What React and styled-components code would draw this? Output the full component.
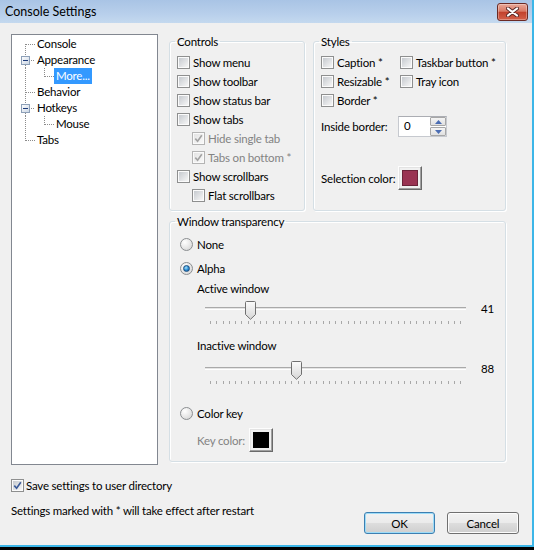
import React from 'react';
import styled, { createGlobalStyle } from 'styled-components';

const FONT = `Lato, "Liberation Sans", Arial, sans-serif`;

const GlobalStyle = createGlobalStyle`
  html, body { margin: 0; padding: 0; background: #000; }
  body { font-family: ${FONT}; font-size: 11.5px; letter-spacing: -0.2px; color: #000; }
  * { box-sizing: border-box; }
`;

const Frame = styled.div`
  width: 534px;
  height: 547px;
  background: #f0f0f0;
  border-right: 2px solid #3cb6e8;
  border-bottom: 2px solid #3cb6e8;
  display: flex;
  flex-direction: column;
`;

const TitleBar = styled.div`
  height: 23px;
  flex: none;
  display: flex;
  align-items: center;
  padding-left: 5px;
  background: linear-gradient(180deg, #a9c4e5 0%, #b8cfeb 60%, #c4d9ef 100%);
`;

const Title = styled.span`
  font-size: 12.5px;
  letter-spacing: 0;
  color: #000;
`;

const CloseButton = styled.div`
  margin-left: auto;
  margin-right: 4px;
  width: 31px;
  height: 18px;
  border: 1px solid #6b2a24;
  border-radius: 3px;
  background: linear-gradient(180deg, #e9a898 0%, #d97a66 45%, #c2422d 52%, #d4614a 100%);
  box-shadow: inset 0 0 0 1px rgba(255, 255, 255, 0.3);
  display: flex;
  align-items: center;
  justify-content: center;
`;

const Body = styled.div`
  flex: 1;
  display: flex;
  flex-direction: column;
  padding: 11px 13px 0 11px;
`;

const MainRow = styled.div`
  display: flex;
  gap: 11px;
  height: 431px;
`;

const Tree = styled.div`
  width: 147px;
  height: 431px;
  background: #fff;
  border: 1px solid #828790;
  padding-top: 1px;
`;

const TreeRow = styled.div`
  display: flex;
  align-items: center;
  height: 16px;
`;

const TreeLabel = styled.span`
  height: 16px;
  line-height: 16px;
  padding: 0 2px;
  background: ${(p) => (p.$selected ? '#3399ff' : 'transparent')};
  color: ${(p) => (p.$selected ? '#fff' : '#000')};
`;

const RightCol = styled.div`
  width: 337px;
  display: flex;
  flex-direction: column;
  gap: 3px;
`;

const TopRow = styled.div`
  display: flex;
  gap: 8px;
  height: 177px;
`;

const Group = styled.fieldset`
  margin: 0;
  padding: 0;
  width: ${(p) => p.$width}px;
  height: ${(p) => p.$height || 177}px;
  border: 1px solid #d5dfe5;
  border-radius: 3px;
  box-shadow: inset 1px 1px 0 #fff, 1px 1px 0 #fff;
  min-width: 0;
`;

const Legend = styled.legend`
  margin-left: 5px;
  padding: 0 2px;
  line-height: 15px;
`;

const GroupBody = styled.div`
  padding: ${(p) => p.$top ?? 4}px 7px 0 7px;
  display: flex;
  flex-direction: column;
`;

const CheckRow = styled.label`
  display: flex;
  align-items: center;
  height: 19px;
  gap: ${(p) => p.$gap ?? 3}px;
  margin-left: ${(p) => p.$indent || 0}px;
  color: ${(p) => (p.$disabled ? '#838383' : '#000')};
  white-space: nowrap;
`;

const Box = styled.span`
  width: 13px;
  height: 13px;
  flex: none;
  border: 1px solid ${(p) => (p.$disabled ? '#b4b4b4' : '#8e8f8f')};
  padding: 1px;
  background: ${(p) =>
    p.$disabled
      ? 'linear-gradient(135deg, #e4e4e4, #f8f8f8) content-box, #fafafa'
      : 'linear-gradient(135deg, #c6cacf, #f6f6f6) content-box, #fbfbfb'};
  display: flex;
  align-items: center;
  justify-content: center;
`;

const StylesGrid = styled.div`
  display: grid;
  grid-template-columns: 79px auto;
  grid-auto-rows: 19px;
`;

const FieldRow = styled.div`
  display: flex;
  align-items: center;
  height: ${(p) => p.$height}px;
  margin-top: ${(p) => p.$top}px;
  margin-left: ${(p) => p.$indent || 0}px;
  color: ${(p) => (p.$disabled ? '#838383' : '#000')};
  white-space: nowrap;
`;

const FieldLabel = styled.span`
  width: ${(p) => p.$width}px;
  flex: none;
`;

const Spinner = styled.div`
  width: 49px;
  height: 21px;
  display: flex;
  background: #fff;
  border: 1px solid #c6c9cf;
  border-top-color: #abadb3;
`;

const SpinInput = styled.div`
  flex: 1;
  padding-left: 5px;
  line-height: 18px;
`;

const SpinButtons = styled.div`
  width: 16px;
  display: flex;
  flex-direction: column;
  gap: 1px;
`;

const SpinButton = styled.div`
  flex: 1;
  border: 1px solid #a7a7a7;
  border-radius: 1px;
  background: linear-gradient(180deg, #f4f4f4, #e0e0e0);
  display: flex;
  align-items: center;
  justify-content: center;
`;

const ColorButton = styled.div`
  width: 24px;
  height: 24px;
  padding: 3px;
  border: 1px solid;
  border-color: #fdfdfd #6a6a6a #6a6a6a #fdfdfd;
  box-shadow: inset -1px -1px 0 #a0a0a0, inset 1px 1px 0 #e3e3e3;
  background: #f0f0f0;
  display: flex;
`;

const ColorFill = styled.span`
  flex: 1;
  background: ${(p) => p.$color};
  border: 1px solid rgba(0, 0, 0, 0.3);
`;

const RadioRow = styled.label`
  display: flex;
  align-items: center;
  height: 19px;
  gap: 4px;
  margin-top: ${(p) => p.$top}px;
  margin-left: 3px;
`;

const RadioCircle = styled.span`
  width: 13px;
  height: 13px;
  flex: none;
  border-radius: 50%;
  border: 1px solid #8b8e91;
  background: radial-gradient(circle at 35% 30%, #ffffff 0%, #e6e6e6 55%, #cfcfcf 100%);
  display: flex;
  align-items: center;
  justify-content: center;
`;

const RadioDot = styled.span`
  width: 7px;
  height: 7px;
  border-radius: 50%;
  border: 1px solid #1d4f7f;
  background: radial-gradient(circle at 40% 35%, #a9e3fb 0%, #2c8fd6 50%, #0d4d8f 100%);
`;

const SubLabel = styled.div`
  margin-left: 20px;
  margin-top: ${(p) => p.$top}px;
  line-height: 15px;
`;

const SliderRow = styled.div`
  display: flex;
  align-items: flex-start;
  height: 28px;
  margin-left: 28px;
  margin-top: ${(p) => p.$top}px;
`;

const Track = styled.div`
  position: relative;
  width: 261px;
  height: 28px;
  display: flex;
  flex-direction: column;
`;

const TrackLine = styled.div`
  margin-top: 9px;
  height: 3px;
  background: #e4e4e4;
  border-top: 1px solid #a9a9a9;
  border-bottom: 1px solid #fff;
`;

const Ticks = styled.div`
  margin-top: 11px;
  padding: 0 5px;
  height: 3px;
  display: flex;
  justify-content: space-between;
`;

const Tick = styled.span`
  width: 1px;
  height: 3px;
  background: #a8a8a8;
`;

const Thumb = styled.svg`
  position: absolute;
  top: 3px;
`;

const SliderValue = styled.span`
  width: 20px;
  margin-left: 8px;
  margin-top: 3px;
  text-align: right;
  line-height: 15px;
`;

const SaveRow = styled(CheckRow)`
  margin-top: 11px;
`;

const Footer = styled.div`
  display: flex;
  align-items: flex-start;
`;

const Note = styled.span`
  margin-top: 8px;
  line-height: 15px;
`;

const Buttons = styled.div`
  margin-left: auto;
  margin-top: 17px;
  display: flex;
  gap: 12px;
`;

const Button = styled.button`
  width: ${(p) => p.$width}px;
  height: 22px;
  font-family: ${FONT};
  font-size: 11.5px;
  letter-spacing: -0.2px;
  color: #000;
  padding: 0;
  border: 1px solid ${(p) => (p.$default ? '#3c7fb1' : '#707070')};
  border-radius: 3px;
  background: linear-gradient(180deg, #f2f2f2 0%, #ebebeb 48%, #dddddd 52%, #cfcfcf 100%);
  box-shadow: inset 0 0 0 1px ${(p) => (p.$default ? '#9ddcf8' : '#fcfcfc')};
`;

function Check({ checked, disabled }) {
  return (
    <Box $disabled={disabled}>
      {checked && (
        <svg width="9" height="9" viewBox="0 0 9 9">
          <path
            d="M1.3 4.6 L3.6 7.2 L7.8 1.2"
            fill="none"
            stroke={disabled ? '#a2a2a2' : '#3a5a98'}
            strokeWidth="1.6"
          />
        </svg>
      )}
    </Box>
  );
}

function CheckItem({ label, checked, disabled, indent, gap }) {
  return (
    <CheckRow $disabled={disabled} $indent={indent} $gap={gap}>
      <Check checked={checked} disabled={disabled} />
      <span>{label}</span>
    </CheckRow>
  );
}

function Radio({ label, checked, top }) {
  return (
    <RadioRow $top={top}>
      <RadioCircle>{checked && <RadioDot />}</RadioCircle>
      <span>{label}</span>
    </RadioRow>
  );
}

const DOT = { stroke: '#8c8c8c', strokeWidth: 1, strokeDasharray: '1 1', shapeRendering: 'crispEdges' };

// connector for a top level tree row: first, mid, last, box, pass
function Connector({ kind }) {
  const v = [];
  if (kind === 'first') v.push([8, 16]);
  if (kind === 'mid' || kind === 'pass') v.push([0, 16]);
  if (kind === 'last') v.push([0, 9]);
  if (kind === 'box') { v.push([0, 4]); v.push([13, 16]); }
  return (
    <svg width="23" height="16" style={{ flex: 'none' }}>
      {v.map(([a, b], i) => (
        <line key={i} x1="13.5" y1={a} x2="13.5" y2={b} {...DOT} />
      ))}
      {kind !== 'pass' && (
        <line x1={kind === 'box' ? 19 : 14} y1="8.5" x2="23" y2="8.5" {...DOT} />
      )}
      {kind === 'box' && (
        <g shapeRendering="crispEdges">
          <rect x="9.5" y="4.5" width="8" height="8" fill="url(#tbox)" stroke="#8da0b8" />
          <line x1="11" y1="8.5" x2="16" y2="8.5" stroke="#1d3b79" />
        </g>
      )}
      <defs>
        <linearGradient id="tbox" x1="0" y1="0" x2="1" y2="1">
          <stop offset="0" stopColor="#ffffff" />
          <stop offset="1" stopColor="#c8d4e3" />
        </linearGradient>
      </defs>
    </svg>
  );
}

function ChildConnector() {
  return (
    <svg width="19" height="16" style={{ flex: 'none' }}>
      <line x1="9.5" y1="0" x2="9.5" y2="9" {...DOT} />
      <line x1="10" y1="8.5" x2="19" y2="8.5" {...DOT} />
    </svg>
  );
}

const treeItems = [
  { label: 'Console', kind: 'first' },
  { label: 'Appearance', kind: 'box' },
  { label: 'More...', child: true, selected: true },
  { label: 'Behavior', kind: 'mid' },
  { label: 'Hotkeys', kind: 'box' },
  { label: 'Mouse', child: true },
  { label: 'Tabs', kind: 'last' },
];

function Slider({ value, top }) {
  const center = 5 + (value / 255) * 251;
  return (
    <SliderRow $top={top}>
      <Track>
        <TrackLine />
        <Ticks>
          {Array.from({ length: 41 }).map((_, i) => (
            <Tick key={i} />
          ))}
        </Ticks>
        <Thumb width="11" height="19" viewBox="0 0 11 19" style={{ left: Math.round(center - 5.5) }}>
          <defs>
            <linearGradient id={`th${value}`} x1="0" y1="0" x2="0" y2="1">
              <stop offset="0" stopColor="#fbfbfb" />
              <stop offset="1" stopColor="#d6d6d6" />
            </linearGradient>
          </defs>
          <path
            d="M0.5 1.5 Q0.5 0.5 1.5 0.5 H9.5 Q10.5 0.5 10.5 1.5 V13.5 L5.5 18.3 L0.5 13.5 Z"
            fill={`url(#th${value})`}
            stroke="#707070"
          />
        </Thumb>
      </Track>
      <SliderValue>{value}</SliderValue>
    </SliderRow>
  );
}

function Triangle({ up }) {
  return (
    <svg width="7" height="4" viewBox="0 0 7 4">
      <path d={up ? 'M0 4 L3.5 0 L7 4 Z' : 'M0 0 L3.5 4 L7 0 Z'} fill="#4b6db3" />
    </svg>
  );
}

export default function App() {
  return (
    <>
      <GlobalStyle />
      <Frame>
        <TitleBar>
          <Title>Console Settings</Title>
          <CloseButton>
            <svg width="13" height="10" viewBox="0 0 13 10">
              <path d="M2 1.5 L11 8.5 M11 1.5 L2 8.5" stroke="#5a2a28" strokeWidth="4" strokeLinecap="round" />
              <path d="M2 1.5 L11 8.5 M11 1.5 L2 8.5" stroke="#fff" strokeWidth="2.2" strokeLinecap="round" />
            </svg>
          </CloseButton>
        </TitleBar>

        <Body>
          <MainRow>
            <Tree>
              {treeItems.map((item) => (
                <TreeRow key={item.label}>
                  <Connector kind={item.child ? 'pass' : item.kind} />
                  {item.child && <ChildConnector />}
                  <TreeLabel $selected={item.selected}>{item.label}</TreeLabel>
                </TreeRow>
              ))}
            </Tree>

            <RightCol>
              <TopRow>
                <Group $width={136}>
                  <Legend>Controls</Legend>
                  <GroupBody>
                    <CheckItem label="Show menu" />
                    <CheckItem label="Show toolbar" />
                    <CheckItem label="Show status bar" />
                    <CheckItem label="Show tabs" />
                    <CheckItem label="Hide single tab" checked disabled indent={15} />
                    <CheckItem label="Tabs on bottom *" checked disabled indent={15} />
                    <CheckItem label="Show scrollbars" />
                    <CheckItem label="Flat scrollbars" indent={15} />
                  </GroupBody>
                </Group>

                <Group $width={193}>
                  <Legend>Styles</Legend>
                  <GroupBody>
                    <StylesGrid>
                      <CheckItem label="Caption *" />
                      <CheckItem label="Taskbar button *" />
                      <CheckItem label="Resizable *" />
                      <CheckItem label="Tray icon" />
                      <CheckItem label="Border *" />
                    </StylesGrid>
                    <FieldRow $height={21} $top={6}>
                      <FieldLabel $width={77}>Inside border:</FieldLabel>
                      <Spinner>
                        <SpinInput>0</SpinInput>
                        <SpinButtons>
                          <SpinButton><Triangle up /></SpinButton>
                          <SpinButton><Triangle /></SpinButton>
                        </SpinButtons>
                      </Spinner>
                    </FieldRow>
                    <FieldRow $height={24} $top={29}>
                      <FieldLabel $width={77}>Selection color:</FieldLabel>
                      <ColorButton>
                        <ColorFill $color="#9a3352" />
                      </ColorButton>
                    </FieldRow>
                  </GroupBody>
                </Group>
              </TopRow>

              <Group $width={337} $height={248}>
                <Legend>Window transparency</Legend>
                <GroupBody $top={0}>
                  <Radio label="None" top={6} />
                  <Radio label="Alpha" checked top={5} />
                  <SubLabel $top={3}>Active window</SubLabel>
                  <Slider value={41} top={2} />
                  <SubLabel $top={12}>Inactive window</SubLabel>
                  <Slider value={88} top={5} />
                  <Radio label="Color key" top={18} />
                  <FieldRow $height={24} $top={5} $indent={20} $disabled>
                    <FieldLabel $width={52}>Key color:</FieldLabel>
                    <ColorButton>
                      <ColorFill $color="#000" />
                    </ColorButton>
                  </FieldRow>
                </GroupBody>
              </Group>
            </RightCol>
          </MainRow>

          <SaveRow $gap={2}>
            <Check checked />
            <span>Save settings to user directory</span>
          </SaveRow>

          <Footer>
            <Note>Settings marked with * will take effect after restart</Note>
            <Buttons>
              <Button $width={71} $default>OK</Button>
              <Button $width={72}>Cancel</Button>
            </Buttons>
          </Footer>
        </Body>
      </Frame>
    </>
  );
}
